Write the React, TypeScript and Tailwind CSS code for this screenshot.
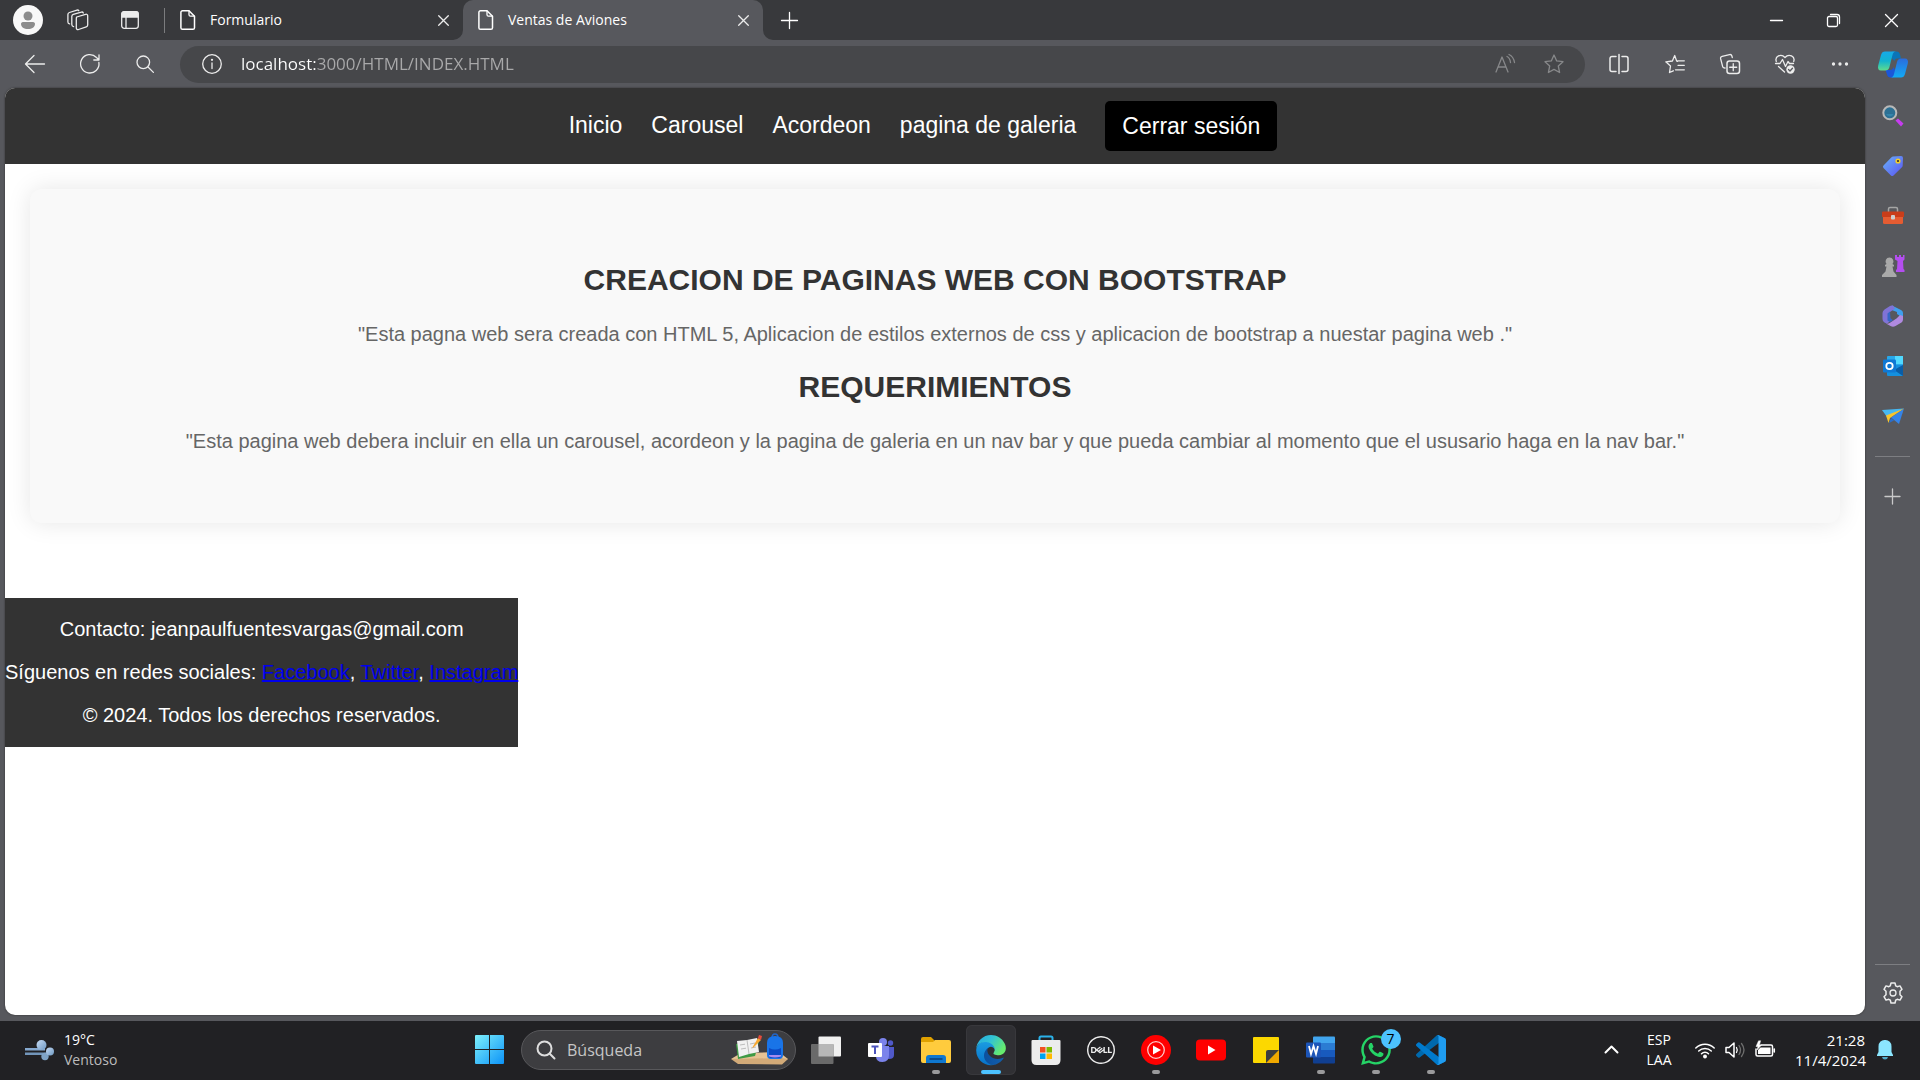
import type { ReactNode } from 'react';
import { SiDell } from 'react-icons/si';
import { FaWhatsapp } from 'react-icons/fa';

type IconProps = { children: ReactNode; size?: string; box?: string; color?: string };

function Line({ children, size = 'size-5', box = '0 0 20 20', color = 'text-[#ececec]' }: IconProps) {
  return (
    <svg className={`${size} ${color} shrink-0 overflow-visible`} viewBox={box} fill="none" stroke="currentColor" strokeWidth="1.3" strokeLinecap="round" strokeLinejoin="round" aria-hidden="true">
      {children}
    </svg>
  );
}

function Art({ children, size = 'size-[22px]', box = '0 0 22 22' }: IconProps) {
  return (
    <svg className={`${size} shrink-0 overflow-visible`} viewBox={box} aria-hidden="true">
      {children}
    </svg>
  );
}

function IconButton({ label, className, children }: { label: string; className: string; children: ReactNode }) {
  return (
    <button type="button" aria-label={label} className={`flex shrink-0 items-center justify-center ${className}`}>
      {children}
    </button>
  );
}

const CloseGlyph = () => (
  <Line size="size-[11px]" box="0 0 11 11"><path d="M.7.7l9.6 9.6M10.3.7L.7 10.3" /></Line>
);

const DocGlyph = () => (
  <Line size="size-5" color="text-white">
    <path d="M4.500.700h6.500l5.500 5.500v11.500a1.600 1.600 0 0 1-1.600 1.600H4.500a1.600 1.600 0 0 1-1.600-1.600V2.300A1.600 1.600 0 0 1 4.500.700z" strokeWidth="1.500" />
    <path d="M11 .9v3.800a1.500 1.500 0 0 0 1.500 1.500h3.900" />
  </Line>
);

function TitleBar() {
  return (
    <header className="flex h-10 shrink-0 items-center bg-[#38393c]">
      <IconButton label="Perfil" className="ml-[13px] size-[30px] rounded-full bg-[#f8f8f8]">
        <Art size="size-[30px]" box="0 0 30 30">
          <circle cx="15" cy="11" r="4.500" fill="#8c8c8c" />
          <path d="M8 18.500a2 2 0 0 1 2-1.500h10a2 2 0 0 1 2 1.500c0 4-3 5.500-7 5.500s-7-1.500-7-5.500z" fill="#8c8c8c" />
        </Art>
      </IconButton>
      <IconButton label="Áreas de trabajo" className="ml-[22px] w-[26px]">
        <Line size="size-[22px]" box="0 0 22 22">
          <path d="M9.700 8l8.800-2.700a1.600 1.600 0 0 1 2.200 1.500v9.200a2 2 0 0 1-1.400 1.900l-7.800 2.600a1.600 1.600 0 0 1-2.200-1.500V9.700c0-.8.100-1.300.4-1.700z" />
          <path d="M6.600 17.600a2 2 0 0 1-1.800-2V7.400c0-1 .6-1.700 1.500-2l8-2.300a1.600 1.600 0 0 1 2 .9" />
          <path d="M2.600 14.900A2 2 0 0 1 .9 13V5.500c0-1 .6-1.700 1.500-2l7.600-2.400a1.600 1.600 0 0 1 1.800.6" />
        </Line>
      </IconButton>
      <IconButton label="Menú de acciones de pestaña" className="ml-[26px] w-[26px]">
        <Line size="size-[18px]" box="0 0 18 18">
          <rect x=".7" y=".7" width="16.600" height="16.600" rx="2.500" />
          <path d="M1 2.500Q1 1 2.500 1h13Q17 1 17 2.500V6H1z" fill="currentColor" />
          <path d="M5 6v11" />
        </Line>
      </IconButton>
      <span className="ml-[21px] h-[25px] w-px bg-[#7b7c7e]" />
      <div role="tablist" className="flex h-10 text-sm text-white">
        <div className="flex w-[298px] items-center pl-[13px]">
          <DocGlyph />
          <button type="button" role="tab" aria-selected="false" className="ml-3 grow text-left">Formulario</button>
          <IconButton label="Cerrar Formulario" className="mr-[10px] size-5"><CloseGlyph /></IconButton>
        </div>
        <div className="relative flex w-[300px] items-center rounded-t-[10px] bg-[#57585d] pl-[13px]">
          <svg className="absolute bottom-0 -left-[10px] size-[10px]" viewBox="0 0 10 10" aria-hidden="true"><path d="M10 0v10H0A10 10 0 0 0 10 0z" fill="#57585d" /></svg>
          <svg className="absolute -right-[10px] bottom-0 size-[10px]" viewBox="0 0 10 10" aria-hidden="true"><path d="M0 0v10h10A10 10 0 0 1 0 0z" fill="#57585d" /></svg>
          <DocGlyph />
          <button type="button" role="tab" aria-selected="true" className="ml-3 grow text-left">Ventas de Aviones</button>
          <IconButton label="Cerrar Ventas de Aviones" className="mr-[10px] size-5"><CloseGlyph /></IconButton>
        </div>
      </div>
      <IconButton label="Nueva pestaña" className="ml-[13px] size-[26px]">
        <Line size="size-[17px]" box="0 0 17 17" color="text-white"><path d="M8.500.500v16M.500 8.500h16" /></Line>
      </IconButton>
      <div className="ml-auto flex h-full">
        <IconButton label="Minimizar" className="w-[58px]"><Line size="size-[13px]" box="0 0 13 13" color="text-white"><path d="M.500 6.500h12" /></Line></IconButton>
        <IconButton label="Restaurar" className="w-[57px]">
          <Line size="size-[13px]" box="0 0 13 13" color="text-white"><rect x=".5" y="2.500" width="10" height="10" rx="1.500" /><path d="M3.500.500H10A2.500 2.500 0 0 1 12.500 3v6.500" /></Line>
        </IconButton>
        <IconButton label="Cerrar" className="w-[58px]"><Line size="size-[13px]" box="0 0 13 13" color="text-white"><path d="M.500.500l12 12M12.500.500l-12 12" /></Line></IconButton>
      </div>
    </header>
  );
}

const starPath = 'M10 1l2.700 5.900 6.300.8-4.700 4.300 1.300 6.500L10 15.400l-5.600 3.100L5.700 12 1 7.700l6.300-.8z';

function Toolbar() {
  return (
    <div className="flex h-12 shrink-0 items-center">
      <IconButton label="Atrás" className="ml-2 w-[54px]"><Line><path d="M19.500 10H.800M9 1.500L.500 10 9 18.500" /></Line></IconButton>
      <IconButton label="Actualizar" className="w-[55px]"><Line><path d="M18.900 8.500A9.200 9.200 0 1 1 16.500 3.500l2 2M19 .800v5.200h-5.200" /></Line></IconButton>
      <IconButton label="Buscar" className="w-[55px]"><Line size="size-[18px]" box="0 0 18 18"><circle cx="7.300" cy="7.300" r="6.300" /><path d="M12 12l5.400 5.400" /></Line></IconButton>
      <div className="ml-2 flex h-[37px] grow items-center rounded-full bg-[#46474a]">
        <IconButton label="Ver información del sitio" className="ml-[22px]">
          <Line><circle cx="10" cy="10" r="9.300" /><path d="M10 9v5.500" /><circle cx="10" cy="5.800" r=".5" fill="currentColor" /></Line>
        </IconButton>
        <input
          aria-label="Barra de direcciones"
          defaultValue="localhost:3000/HTML/INDEX.HTML"
          className="ml-[19px] min-w-0 grow bg-[linear-gradient(90deg,#ffffff_75px,#a9a9aa_75px)] bg-clip-text text-[17px] text-transparent outline-none"
        />
        <IconButton label="Leer en voz alta" className="w-12">
          <Line color="text-[#87888a]"><path d="M1 18L7 3l6 15M3 13h8M12 2.500q3 1.500 3.500 6M14 .500q4.500 2 5.500 8" /></Line>
        </IconButton>
        <IconButton label="Agregar a favoritos" className="mr-[6px] w-[50px]"><Line color="text-[#87888a]"><path d={starPath} /></Line></IconButton>
      </div>
      <div className="ml-[6px] flex items-center">
        <IconButton label="Pantalla dividida" className="w-14">
          <Line><path d="M7 2.500H3a2 2 0 0 0-2 2v11a2 2 0 0 0 2 2h4M13 2.500h4a2 2 0 0 1 2 2v11a2 2 0 0 1-2 2h-4M10 .500v19" strokeWidth="1.500" /></Line>
        </IconButton>
        <IconButton label="Favoritos" className="w-14">
          <Line><path d="M12.500 7.300l-.800-.200L9.700 1.500 7.400 7l-6.600.8L5.500 12l-1 6.500 3.800-1.700M12.500 6.800h6.800M13 11.300h6.300M10.500 15.800h8.800" /></Line>
        </IconButton>
        <IconButton label="Colecciones" className="w-[54px]">
          <Line><path d="M5 14l-1-.2a2 2 0 0 1-1.400-1.500L.6 4.700a2 2 0 0 1 1.500-2.400L9.500.600a2 2 0 0 1 2.400 1.400l.4 1.500" /><rect x="7" y="7" width="12.500" height="12.500" rx="2.500" strokeWidth="1.500" /><path d="M13.250 9.700v7M9.700 13.250h7" /></Line>
        </IconButton>
        <IconButton label="Información esencial del explorador" className="w-14">
          <Line><path d="M1.300 7.500C-.5 2.500 6-1 10 3.500 14-1 20.500 2.500 18.700 7.500M.5 9.500h4.500l2.500-4 3 7 2.500-5 1.500 2h4M3.500 12.500l6 5.500" /><circle cx="15.500" cy="15.500" r="4.200" fill="currentColor" stroke="none" /><path d="M13.500 15.500l1.500 1.500 2.500-2.800" stroke="#57585d" /></Line>
        </IconButton>
        <IconButton label="Configuración y más" className="w-[54px]">
          <Line><g fill="currentColor"><circle cx="3.500" cy="10" r="1" /><circle cx="10" cy="10" r="1" /><circle cx="16.500" cy="10" r="1" /></g></Line>
        </IconButton>
        <IconButton label="Copilot" className="ml-[-2px] w-[55px]">
          <Art size="h-[27px] w-[30px]" box="0 0 30 27">
            <defs>
              <linearGradient id="cpA" x1="0" y1="0" x2="0" y2="1"><stop stopColor="#16a9e8" /><stop offset=".5" stopColor="#12b3cf" /><stop offset="1" stopColor="#5fdc8c" /></linearGradient>
              <linearGradient id="cpB" x1="0" y1="0" x2="0" y2="1"><stop stopColor="#2b6cdc" /><stop offset="1" stopColor="#12aaf5" /></linearGradient>
            </defs>
            <path d="M14 .500h4.500c2 0 3 1 3.500 3l1 4h-3c-2 0-3 .5-3.500 2.500l-4-4z" fill="#0a74b8" />
            <path d="M7.500 19H12c2 0 3-1 3.500-3l2 4-2 6.500h-3c-2 0-3-1-3.500-3z" fill="#1b57d8" />
            <path d="M7 .500h11c-2 0-3 1.500-3.500 3.500l-3.200 12.500c-.5 2-2 3-4 3H3c-2.500 0-3.500-2-2.800-5L3 4C3.700 1.500 5 .500 7 .500z" fill="url(#cpA)" />
            <path d="M23 26.500H12.500c2 0 3-1.500 3.500-3.500l3-12c.5-2 2-3.500 4-3.500h4c2.500 0 3.500 2 2.800 5L27 23c-.7 2.500-2 3.500-4 3.500z" fill="url(#cpB)" />
          </Art>
        </IconButton>
      </div>
    </div>
  );
}

function Sidebar() {
  return (
    <aside className="flex w-[55px] shrink-0 flex-col items-center pt-[3px]">
      <IconButton label="Búsqueda" className="h-[50px] w-full">
        <Art><path d="M13.500 15.500l2.500-2 5.500 5-2.500 3z" fill="#c63cf0" /><circle cx="7.800" cy="7.800" r="6.500" fill="#2c7094" stroke="#b8b8b8" strokeWidth="2" /><path d="M4 9a4.200 4.200 0 0 0 7.600 0z" fill="#3585ab" /></Art>
      </IconButton>
      <IconButton label="Compras" className="h-[50px] w-full">
        <Art>
          <defs><linearGradient id="tag" x1="0" y1="0" x2="1" y2="1"><stop stopColor="#69b4f7" /><stop offset="1" stopColor="#5b52f2" /></linearGradient></defs>
          <path d="M11 1.500l8-.5q2 0 2 2l-.3 7.500q0 1-.8 1.800L11.500 20.500q-1.300 1-2.600 0L1.500 13q-1.200-1.300 0-2.600L9.500 2.200q.6-.6 1.500-.7z" fill="url(#tag)" /><circle cx="16" cy="6" r="2.600" fill="#f4cd2a" /><circle cx="16" cy="6" r="1.100" fill="#333" />
        </Art>
      </IconButton>
      <IconButton label="Herramientas" className="h-[50px] w-full">
        <Art><path d="M6.500 7V4q0-1.500 1.500-1.500h6q1.500 0 1.500 1.500v3" fill="none" stroke="#a5a5a5" strokeWidth="1.500" /><rect x="1" y="8" width="20" height="11" rx="1.500" fill="#e55c32" /><path d="M0 7.500Q0 6.500 1 6.500h20q1 0 1 1V12H0z" fill="#c93d1a" /><rect x="9" y="10" width="4" height="4.500" rx="1" fill="#cfcfcf" /></Art>
      </IconButton>
      <IconButton label="Juegos" className="h-[50px] w-full">
        <Art><path d="M13 0h2v2h2V0h2v2h2V0h1.500v4.500L21 6l.5 8 1 1v2H14v-2l1-1 .5-8L13 4.500z" fill="#b44ef0" /><path d="M7.500 2.500a4 4 0 0 1 3 6.600l1.500 1v1.500h-1.500l1 5 3 3.400v2H0v-2l3.500-3.400 1-5H3v-1.500l1.500-1a4 4 0 0 1 3-6.600z" fill="#a9a9a9" /></Art>
      </IconButton>
      <IconButton label="Microsoft 365" className="h-[50px] w-full">
        <Art>
          <path d="M10 .500l9 4.500q2 1 2 3v5l-6-4V7L7 4z" fill="#3fa0ee" />
          <path d="M11 .500Q9 .300 8 1L2.500 4.500Q.500 6 .500 8v6q0 2.500 2 3.500l2.500 1.200 3-2.500V7l5-3.500z" fill="#8073d6" />
          <path d="M21 11v3.500q0 2-1.500 3l-6 3.500q-2.500 1.300-5 0L4 18.500q2 .500 4-.8l6.500-4.200L18 10z" fill="#b08ae0" />
          <path d="M8 6.500L5.500 8.500v7l2.500 1.500 3-1.700-2.500-2z" fill="#3667c5" />
        </Art>
      </IconButton>
      <IconButton label="Outlook" className="h-[50px] w-full">
        <Art><rect x="5" y="1" width="16" height="19" rx="1" fill="#28a8ea" /><path d="M13 1h8v8h-8z" fill="#50d9ff" /><path d="M5 10h16v11H6q-1 0-1-1z" fill="#1490df" /><path d="M21 10v11l-9-6z" fill="#0a5da6" /><rect x="1" y="4.500" width="13" height="13" rx="1.200" fill="#0f78d4" /><circle cx="7.500" cy="11" r="3.200" fill="none" stroke="#fff" strokeWidth="1.800" /></Art>
      </IconButton>
      <IconButton label="Drop" className="h-[50px] w-full">
        <Art><path d="M0 5L22 3.500 5 12z" fill="#46b8f2" /><path d="M22 3.500L17 19 9 12.500z" fill="#3584e8" /><path d="M4 10.500L22 3.500 8 13l-1.500 5z" fill="#f7c52d" /><path d="M9 13l3 2.500-5 2.500z" fill="#2a6ecc" /></Art>
      </IconButton>
      <span className="mt-[15px] h-px w-[35px] bg-[#7d7e82]" />
      <IconButton label="Personalizar" className="mt-6 size-[30px]"><Line size="size-[15px]" box="0 0 15 15" color="text-[#c9c9ca]"><path d="M7.500 0v15M0 7.500h15" /></Line></IconButton>
      <span className="mt-auto h-px w-[35px] bg-[#7d7e82]" />
      <IconButton label="Configuración" className="my-[13px] size-[30px]">
        <Line size="size-[22px]" box="0 0 22 22">
          <path d="M9 1h4l.7 2.800 1.500.9 2.800-.8 2 3.400-2 2v3.400l2 2-2 3.400-2.800-.8-1.500.9L13 21H9l-.7-2.800-1.500-.9-2.800.8-2-3.400 2-2V9.300l-2-2 2-3.400 2.800.8 1.500-.9z" strokeWidth="1.500" /><circle cx="11" cy="11" r="3" />
        </Line>
      </IconButton>
    </aside>
  );
}

const navLinks = ['Inicio', 'Carousel', 'Acordeon', 'pagina de galeria'];

function WebPage() {
  return (
    <main className="ml-[5px] min-w-0 grow overflow-hidden rounded-[10px] bg-white font-['Liberation_Sans',Arial,sans-serif] shadow-[0_0_2px_#2a2a2a]">
      <nav className="flex h-[76px] items-center justify-center gap-[29px] bg-[#333333] pr-6 text-[23px] text-white">
        {navLinks.map((label) => (
          <a key={label} href="#" className="pb-[2px]">{label}</a>
        ))}
        <button type="button" className="h-[50px] rounded-[5px] bg-black px-[17px]">Cerrar sesión</button>
      </nav>
      <section className="m-[25px] rounded-xl bg-[#f9f9f9] px-6 pt-[74px] pb-[70px] text-center shadow-[0_0_25px_rgba(0,0,0,0.1)]">
        <h2 className="text-[30px] leading-[34px] font-bold text-[#333333]">CREACION DE PAGINAS WEB CON BOOTSTRAP</h2>
        <p className="mt-[25px] text-[20px] leading-6 text-[#666666]">"Esta pagna web sera creada con HTML 5, Aplicacion de estilos externos de css y aplicacion de bootstrap a nuestar pagina web ."</p>
        <h2 className="mt-6 text-[30px] leading-[34px] font-bold text-[#333333]">REQUERIMIENTOS</h2>
        <p className="mt-[25px] text-[20px] leading-6 text-[#666666]">"Esta pagina web debera incluir en ella un carousel, acordeon y la pagina de galeria en un nav bar y que pueda cambiar al momento que el ususario haga en la nav bar."</p>
      </section>
      <footer className="mt-[75px] flex w-fit flex-col gap-5 bg-[#333333] py-5 text-center text-[20px] leading-[23px] text-white">
        <p>Contacto: jeanpaulfuentesvargas@gmail.com</p>
        <p>
          Síguenos en redes sociales: <a href="#" className="text-[#0000ee] underline">Facebook</a>, <a href="#" className="text-[#0000ee] underline">Twitter</a>, <a href="#" className="text-[#0000ee] underline">Instagram</a>
        </p>
        <p>© 2024. Todos los derechos reservados.</p>
      </footer>
    </main>
  );
}

function TaskbarApp({ label, running, active, children }: { label: string; running?: boolean; active?: boolean; children: ReactNode }) {
  return (
    <button type="button" aria-label={label} className="flex h-full w-[55px] items-center justify-center">
      <span className={`relative flex size-[50px] items-center justify-center rounded-md ${active ? 'bg-[#303034] ring-1 ring-[#38383c] ring-inset' : ''}`}>
        {children}
        {running && <span className={`absolute bottom-[1px] h-1 rounded-full ${active ? 'w-5 bg-[#4cc2ff]' : 'w-2 bg-[#9a9a9c]'}`} />}
      </span>
    </button>
  );
}

function Taskbar() {
  return (
    <footer className="grid h-[59px] shrink-0 grid-cols-[1fr_auto_1fr] items-center bg-[#212124] pb-[2px] text-sm leading-5 text-white">
      <button type="button" className="flex items-center gap-[10px] justify-self-start pl-[25px] text-left">
        <Art size="h-5 w-[29px]" box="0 0 29 20">
          <defs><linearGradient id="wind" x1="0" y1="0" x2="1" y2="1"><stop stopColor="#c7dcf5" /><stop offset="1" stopColor="#6d98c2" /></linearGradient></defs>
          <rect y="8" width="20" height="2.500" fill="#86a9cf" /><rect y="12.500" width="22" height="2.500" fill="#7295ba" />
          <circle cx="16.500" cy="5" r="5" fill="url(#wind)" /><circle cx="20" cy="16.500" r="3.700" fill="#7fa3c6" /><circle cx="25" cy="11.500" r="4" fill="url(#wind)" />
        </Art>
        <span><span className="block">19°C</span><span className="block text-[#bcbcbc]">Ventoso</span></span>
      </button>
      <div className="flex h-[57px] items-center">
        <TaskbarApp label="Inicio">
          <Art size="size-[29px]" box="0 0 29 29">
            <defs><linearGradient id="win" x1="0" y1="0" x2="1" y2="1"><stop stopColor="#7df0fb" /><stop offset="1" stopColor="#0c93f8" /></linearGradient></defs>
            <path d="M1 0h13v14H0V1q0-1 1-1zM15 0h13q1 0 1 1v13H15zM0 15h14v14H1q-1 0-1-1zM15 15h14v13q0 1-1 1H15z" fill="url(#win)" />
          </Art>
        </TaskbarApp>
        <div className="mr-[2px] ml-1 flex h-10 w-[275px] items-center rounded-full border border-[#58585b] bg-[#3d3d40] pl-[15px]">
          <svg className="size-[18px] shrink-0 overflow-visible" viewBox="0 0 18 18" fill="none" stroke="#dedede" strokeWidth="2" strokeLinecap="round" aria-hidden="true"><circle cx="7.500" cy="7.500" r="7" /><path d="M12.800 12.800l4.700 4.700" /></svg>
          <input aria-label="Búsqueda" placeholder="Búsqueda" className="ml-3 min-w-0 grow bg-transparent text-base outline-none placeholder:text-[#c6c6c6]" />
          <Art size="h-[31px] w-[57px] mr-[7px]" box="0 0 57 31">
            <path d="M0 25l10-6 38-1 9 7-6 2z" fill="#e6c394" /><path d="M0 25l51-1 6 1-6 5.500-44-.5z" fill="#d2aa78" />
            <path d="M5 10l2 15 17-3 4-14z" fill="#3f9a45" /><path d="M6 7l10-1 10-2 2 14-10 2-10 3z" fill="#f1f1f1" /><path d="M16 6l2 14M9 11l5-.8M10 15l5-.8M19 10l5-1M20 14l5-1" stroke="#bdbdbd" strokeWidth="1" />
            <path d="M21 14L27 4l3 2-7 7z" fill="#f7a832" /><path d="M27 4l1-3 3 1-1 4z" fill="#e64b3c" />
            <path d="M41 4q0-4 3-4t3 4" fill="none" stroke="#2265c8" strokeWidth="1.500" /><path d="M36 9q0-7 8-7t8 7v12q0 4-4 4h-8q-4 0-4-4z" fill="#1974e8" /><path d="M38 14q6 3 12 0v8q0 2-2 2h-8q-2 0-2-2z" fill="#0b4ac4" /><path d="M38 21h12v1.500q-6 2-12 0z" fill="#a58bf0" />
          </Art>
        </div>
        <TaskbarApp label="Vista de tareas">
          <Art size="size-[30px]" box="0 0 30 30"><rect x="7.500" y="1.500" width="22.500" height="20" rx="1" fill="#f0f0f0" /><rect y="9" width="22.500" height="20" rx="1" fill="#6a6a6a" /><path d="M7.500 9h15v12.500h-15z" fill="#b7b7b7" /></Art>
        </TaskbarApp>
        <TaskbarApp label="Teams">
          <Art size="size-[26px]" box="0 0 26 26"><circle cx="15" cy="5" r="4" fill="#7b83eb" /><circle cx="22.500" cy="6" r="2.700" fill="#5059c9" /><path d="M17 10h9v8q0 4-5 4-3 0-4-3z" fill="#5059c9" /><path d="M8 9h13v9q0 7-6.500 7T8 19z" fill="#7b83eb" /><rect y="6" width="14" height="14" rx="1" fill="#fff" /><path d="M3.500 9.500h7M7 9.500V17" fill="none" stroke="#4b53bc" strokeWidth="2" /></Art>
        </TaskbarApp>
        <TaskbarApp label="Explorador de archivos" running>
          <Art size="size-[30px]" box="0 0 30 30"><path d="M0 4q0-2 2-2h8l4 4h2v6H0z" fill="#e0a100" /><path d="M0 7h12l2-2h14q2 0 2 2v19q0 2-2 2H2q-2 0-2-2z" fill="#ffcb3d" /><path d="M5 23q0-3 3-3h14q3 0 3 3v5H5z" fill="#0f78d0" /><path d="M8.500 24h13" stroke="#0a3f79" strokeWidth="1.500" /></Art>
        </TaskbarApp>
        <TaskbarApp label="Microsoft Edge" running active>
          <Art size="size-[30px]" box="4 0 257 259">
            <defs>
              <linearGradient id="edA" x1="0" y1="0" x2="1" y2="0"><stop stopColor="#0c4f9c" /><stop offset="1" stopColor="#115fae" /></linearGradient>
              <linearGradient id="edB" x1="0" y1="0" x2="0" y2="1"><stop stopColor="#1b9de2" /><stop offset="1" stopColor="#0872c9" /></linearGradient>
              <linearGradient id="edC" x1="0" y1="0" x2="1" y2=".5"><stop stopColor="#25a9e0" /><stop offset=".5" stopColor="#32c3d4" /><stop offset="1" stopColor="#66eb6e" /></linearGradient>
            </defs>
            <path fill="url(#edA)" d="M235.680 195.460a93.730 93.730 0 0 1-10.540 4.710 101.870 101.870 0 0 1-35.900 6.460c-47.320 0-88.540-32.550-88.540-74.320A31.480 31.480 0 0 1 117.130 105c-42.800 1.800-53.800 46.400-53.800 72.530 0 73.880 68.090 81.370 82.760 81.370 7.910 0 19.840-2.300 27-4.560l1.310-.44a128.340 128.340 0 0 0 66.600-52.800 4 4 0 0 0-5.320-5.640z" />
            <path fill="url(#edB)" d="M110.340 246.340A79.200 79.200 0 0 1 87.600 225a80.720 80.720 0 0 1 29.530-120c3.120-1.470 8.450-4.130 15.540-4a32.350 32.350 0 0 1 25.690 13 31.880 31.880 0 0 1 6.360 18.660c0-.21 24.460-79.600-80-79.600-43.900 0-80 41.660-80 78.210a130.150 130.150 0 0 0 12.110 56 128 128 0 0 0 156.380 67.110 75.550 75.550 0 0 1-62.780-8z" />
            <path fill="url(#edC)" d="M156.940 153.780c-.81 1.050-3.300 2.500-3.300 5.660 0 2.610 1.700 5.120 4.720 7.230 14.380 10 41.490 8.680 41.560 8.680a59.560 59.560 0 0 0 30.270-8.350 61.380 61.380 0 0 0 30.430-52.880c.26-22.410-8-37.310-11.340-43.910C228.090 28.760 182.350.2 132.610.2a128 128 0 0 0-128 126.200c.48-36.540 36.800-66.050 80-66.050 3.500 0 23.460.34 42 10.070 16.340 8.580 24.900 18.940 30.850 29.210 6.180 10.670 7.280 24.150 7.280 29.520 0 5.370-2.740 13.330-7.800 19.830z" />
          </Art>
        </TaskbarApp>
        <TaskbarApp label="Microsoft Store">
          <Art size="size-[30px]" box="0 0 30 30"><path d="M8.500 6V3q0-1.500 1.500-1.500h10q1.500 0 1.500 1.500v3" fill="none" stroke="#2bb2ea" strokeWidth="2" /><path d="M.5 6q0-1 1-1h27q1 0 1 1v19q0 5-5 5h-19q-5 0-5-5z" fill="#ececec" /><path d="M9 12h5.500v5.500H9z" fill="#f25022" /><path d="M15.500 12H21v5.500h-5.500z" fill="#7fba00" /><path d="M9 18.500h5.500V24H9z" fill="#00a4ef" /><path d="M15.500 18.500H21V24h-5.500z" fill="#ffb900" /></Art>
        </TaskbarApp>
        <TaskbarApp label="Dell"><SiDell className="size-7 text-[#ececec]" /></TaskbarApp>
        <TaskbarApp label="YouTube Music" running>
          <Art size="size-[30px]" box="0 0 30 30"><circle cx="15" cy="15" r="15" fill="#f00" /><circle cx="15" cy="15" r="8.300" fill="none" stroke="#ffc9c9" strokeWidth="1.300" /><path d="M12 10.500l8 4.500-8 4.500z" fill="#fff" /></Art>
        </TaskbarApp>
        <TaskbarApp label="YouTube">
          <Art size="size-[30px]" box="0 0 30 30"><rect y="4.500" width="30" height="21" rx="4" fill="#f00" /><path d="M12 10.500l7.500 4.500-7.500 4.500z" fill="#fff" /></Art>
        </TaskbarApp>
        <TaskbarApp label="Notas rápidas">
          <Art size="size-[26px]" box="0 0 26 26"><path d="M0 1q0-1 1-1h24q1 0 1 1v24q0 1-1 1H1q-1 0-1-1z" fill="#fcd800" /><path d="M13 26l13-13v12q0 1-1 1z" fill="#f0a800" /><path d="M13 26V15q0-2 2-2h11z" fill="#3d3d3d" /></Art>
        </TaskbarApp>
        <TaskbarApp label="Word" running>
          <Art size="size-[30px]" box="0 0 30 30"><path d="M7 2.500q0-1 1-1h20q1 0 1 1V8H7z" fill="#41a5ee" /><path d="M7 8h22v7H7z" fill="#2b7cd3" /><path d="M7 15h22v7H7z" fill="#185abd" /><path d="M7 22h22v5.500q0 1-1 1H8q-1 0-1-1z" fill="#103f91" /><rect y="7.500" width="15" height="15" rx="1" fill="#1c55b8" /><path d="M3 11l2 8 2.500-8L10 19l2-8" fill="none" stroke="#fff" strokeWidth="1.800" /></Art>
        </TaskbarApp>
        <TaskbarApp label="WhatsApp" running>
          <FaWhatsapp className="size-[34px] text-[#25d366]" />
          <span className="absolute top-1 right-0 flex size-5 items-center justify-center rounded-full bg-[#4cc2ff] text-sm text-black">7</span>
        </TaskbarApp>
        <TaskbarApp label="Visual Studio Code" running>
          <Art size="size-[30px]" box="0 0 100 100">
            <path fill="#0069ad" d="M96.460 10.800L75.860.880A6.200 6.200 0 0 0 68.750 2.080L1.300 63.580a4.160 4.160 0 0 0 0 6.170l5.510 5a4.160 4.160 0 0 0 5.320.24l81.230-61.620A4.160 4.160 0 0 1 100 16.670v-.24a6.250 6.250 0 0 0-3.540-5.630z" />
            <path fill="#007acc" d="M96.460 89.200l-20.600 9.920a6.200 6.200 0 0 1-7.110-1.200L1.300 36.420a4.160 4.160 0 0 1 0-6.170l5.510-5a4.160 4.160 0 0 1 5.320-.24l81.230 61.620A4.160 4.160 0 0 0 100 83.330v.24a6.250 6.250 0 0 1-3.540 5.630z" />
            <path fill="#1f9cf0" d="M75.860 99.130a6.200 6.200 0 0 1-7.110-1.210A3.660 3.660 0 0 0 75 95.330V4.670A3.660 3.660 0 0 0 68.750 2.080 6.200 6.200 0 0 1 75.860.870l20.600 9.910A6.250 6.250 0 0 1 100 16.410v67.180a6.250 6.250 0 0 1-3.540 5.630z" />
          </Art>
        </TaskbarApp>
      </div>
      <div className="flex items-center justify-self-end">
        <IconButton label="Mostrar iconos ocultos" className="w-9"><Line size="h-[7px] w-[13px]" box="0 0 13 7" color="text-white"><path d="M.500 6.500l6-6 6 6" strokeWidth="2" /></Line></IconButton>
        <button type="button" className="ml-3 w-9 text-center">ESP<br />LAA</button>
        <button type="button" aria-label="Red, volumen y batería" className="ml-[18px] flex items-center gap-[10px]">
          <Line size="size-5" color="text-white"><path d="M.800 8a13 13 0 0 1 18.400 0M3.700 11a9 9 0 0 1 12.600 0M6.500 13.800a5 5 0 0 1 7 0" strokeWidth="1.500" /><circle cx="10" cy="16.500" r="1.300" fill="currentColor" /></Line>
          <Line size="size-5" color="text-white"><path d="M1 7.500h3l5-4.500v14l-5-4.500H1z" strokeWidth="1.500" /><path d="M11.500 7.500q1.500 2.500 0 5" /><path d="M14 5.500q3 4.500 0 9M16.500 3.500q5 6.500 0 13" stroke="#6d6d6d" /></Line>
          <Line size="size-5" color="text-white"><path d="M6 5h10q1.500 0 1.500 1.500v8Q17.500 16 16 16H2.500Q1 16 1 14.500V9M19.300 9v3" strokeWidth="1.500" /><path d="M5.500 7.500h10v6.500H3v-4z" fill="currentColor" stroke="none" /><path d="M3.500 1L1 6.500h2L2 10l4.500-5h-2l1-4z" fill="currentColor" strokeWidth=".5" /></Line>
        </button>
        <button type="button" className="ml-5 w-[70px] text-right text-[15px] leading-5 whitespace-nowrap">21:28<br />11/4/2024</button>
        <IconButton label="Notificaciones" className="mr-[27px] ml-3">
          <Art size="h-5 w-4" box="0 0 16 20"><path d="M8 0a6 6 0 0 1 6.500 6.500V12l1.500 3v1H0v-1l1.500-3V6.500A6 6 0 0 1 8 0z" fill="#8be6ff" /><path d="M5 17h6q-.5 2.500-3 2.500T5 17z" fill="#4fa9c9" /></Art>
        </IconButton>
      </div>
    </footer>
  );
}

export default function App() {
  return (
    <div className="flex h-screen flex-col overflow-hidden bg-[#57585d] font-['Open_Sans',sans-serif]">
      <TitleBar />
      <Toolbar />
      <div className="flex min-h-0 grow">
        <div className="flex min-w-0 grow pb-[6px]"><WebPage /></div>
        <Sidebar />
      </div>
      <Taskbar />
    </div>
  );
}
